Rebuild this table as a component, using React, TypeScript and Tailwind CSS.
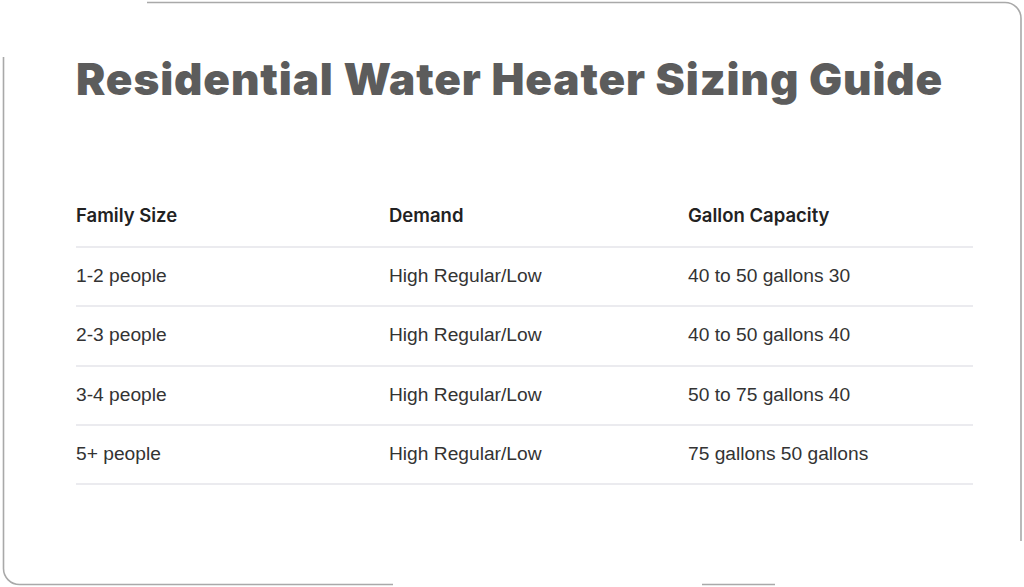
const rows = [
  { size: '1-2 people', demand: 'High Regular/Low', capacity: '40 to 50 gallons 30' },
  { size: '2-3 people', demand: 'High Regular/Low', capacity: '40 to 50 gallons 40' },
  { size: '3-4 people', demand: 'High Regular/Low', capacity: '50 to 75 gallons 40' },
  { size: '5+ people', demand: 'High Regular/Low', capacity: '75 gallons 50 gallons' },
];

// partially drawn card outline
function Outline() {
  return (
    <svg
      className="pointer-events-none absolute inset-0"
      width="1024"
      height="587"
      viewBox="0 0 1024 587"
      fill="none"
      stroke="#a9a9a9"
      strokeWidth="1.6"
    >
      <path d="M147 2.5 H1005 A16 16 0 0 1 1021 18.5 V541" />
      <path d="M3.5 57 V568.5 A16 16 0 0 0 19.5 584.5 H393" />
      <path d="M702 584.5 H775" />
    </svg>
  );
}

export default function App() {
  return (
    <div className="relative h-[587px] w-[1024px] overflow-hidden bg-white">
      <Outline />
      <div className="pl-[76px] pr-[51px] pt-[57px]">
        <h1
          className="text-[44px] font-black leading-none tracking-[0.02em] text-[#5c5c5c]"
          style={{ fontFamily: 'Inter, "DejaVu Sans", sans-serif' }}
        >
          Residential Water Heater Sizing Guide
        </h1>

        <div className="mt-[88px]" style={{ fontFamily: '"Liberation Sans", Arial, sans-serif' }}>
          <div
            className="grid h-[59px] grid-cols-[313px_299px_1fr] items-center border-b-2 border-[#ebebef] pb-[4px] text-[18.5px] font-semibold text-[#222]"
            style={{ fontFamily: 'Inter, "Liberation Sans", sans-serif' }}
          >
            <div>Family Size</div>
            <div>Demand</div>
            <div>Gallon Capacity</div>
          </div>
          {rows.map((row) => (
            <div
              key={row.size}
              className="grid h-[59.25px] grid-cols-[313px_299px_1fr] items-center border-b-2 border-[#ebebef] text-[19.2px] text-[#333]"
            >
              <div>{row.size}</div>
              <div>{row.demand}</div>
              <div>{row.capacity}</div>
            </div>
          ))}
        </div>
      </div>
    </div>
  );
}
